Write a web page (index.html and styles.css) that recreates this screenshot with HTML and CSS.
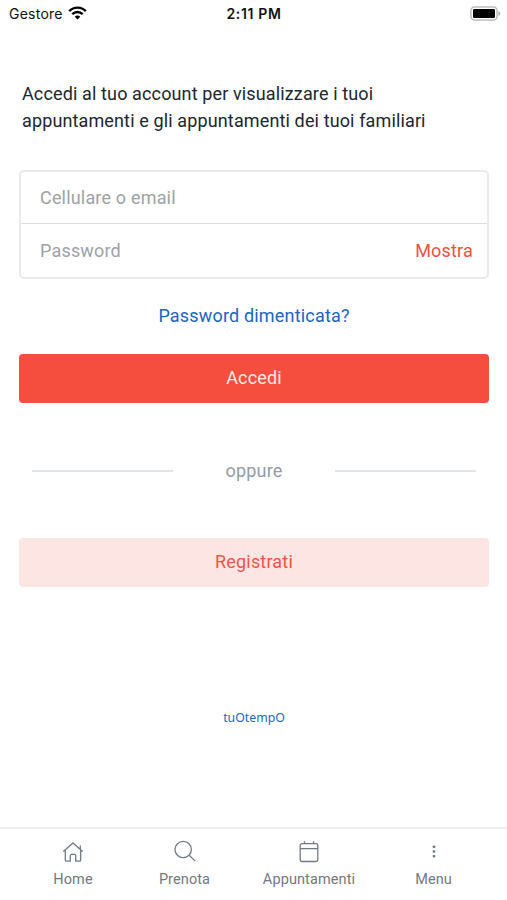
FILE: index.html
```html
<!DOCTYPE html>
<html lang="it">
<head>
<meta charset="utf-8">
<meta name="viewport" content="width=device-width, initial-scale=1">
<title>Accedi</title>
<link rel="stylesheet" href="styles.css">
</head>
<body>
<div class="app">
  <header class="status">
    <div class="carrier"><span>Gestore</span>
      <svg class="wifi" width="19" height="14" viewBox="0 0 19 14" fill="none" stroke="#050505" stroke-width="2.4"><path d="M1.2 5.1C5.8.4 13.2.4 17.8 5.1M4.3 8.2c2.9-2.9 7.5-2.9 10.4 0"/><path d="M6.7 10.7c1.7-1.5 3.9-1.5 5.6 0L9.5 13.5z" fill="#050505" stroke="none"/></svg>
    </div>
    <time class="time">2:11 PM</time>
    <svg class="battery" width="31" height="15" viewBox="0 0 31 15"><rect x=".9" y=".9" width="26.2" height="13.2" rx="3.8" fill="#fff" stroke="#bdbdbd" stroke-width="1.5"/><rect x="3" y="3" width="22" height="9" rx="1.2" fill="#000"/><path d="M28.5 5.2c2.3.8 2.3 3.8 0 4.6z" fill="#aaa"/></svg>
  </header>
  <main class="content">
    <p class="intro">Accedi al tuo account per visualizzare i tuoi<br>appuntamenti e gli appuntamenti dei tuoi familiari</p>
    <form class="form">
      <div class="fields">
        <label class="field"><input class="input" type="text" placeholder="Cellulare o email"></label>
        <div class="field"><input class="input" type="password" placeholder="Password"><button class="show" type="button">Mostra</button></div>
      </div>
      <a class="forgot" href="#">Password dimenticata?</a>
      <button class="button primary" type="button">Accedi</button>
    </form>
    <div class="separator"><span>oppure</span></div>
    <button class="button secondary" type="button">Registrati</button>
    <a class="brand" href="#">tuOtempO</a>
  </main>
  <nav class="tabs">
    <a class="tab" href="#"><svg width="24" height="24" viewBox="0 0 24 24"><path d="M2.3 11.6 12 3l9.7 8.6M19.3 5.6v3.8M4.3 10v10q0 1.2 1.2 1.2h3.8v-5.8q0-1 1-1h3.4q1 0 1 1v5.8h3.8q1.2 0 1.2-1.2V10"/></svg><span>Home</span></a>
    <a class="tab" href="#"><svg width="24" height="24" viewBox="0 0 24 24"><circle cx="10.2" cy="9.5" r="8.2"/><path d="m16.2 15.3 6 5.8"/></svg><span>Prenota</span></a>
    <a class="tab" href="#"><svg width="24" height="24" viewBox="0 0 24 24"><rect x="3.2" y="3.7" width="17.6" height="17.8" rx="1.7"/><path d="M3.2 8.6h17.6M7.5 1.2v2.5M16.5 1.2v2.5"/></svg><span>Appuntamenti</span></a>
    <a class="tab" href="#"><svg class="dots" width="24" height="24" viewBox="0 0 24 24"><rect x="10.7" y="5.4" width="2.6" height="2.6" rx=".8"/><rect x="10.7" y="10.2" width="2.6" height="2.6" rx=".8"/><rect x="10.7" y="15" width="2.6" height="2.6" rx=".8"/></svg><span>Menu</span></a>
  </nav>
</div>
</body>
</html>
```
FILE: styles.css
```css
* { box-sizing: border-box; }
body { margin: 0; background: #fff; font-family: Roboto, sans-serif; font-size: 18px; letter-spacing: .18px; color: #20262e; }
a { text-decoration: none; }
button, input { font: inherit; letter-spacing: inherit; border: 0; padding: 0; background: none; }
.app { height: 900px; display: flex; flex-direction: column; overflow: hidden; }
.status { height: 28px; padding: 0 6px 2px 9px; display: grid; grid-template-columns: 1fr auto 1fr; align-items: center; font-family: Inter, sans-serif; font-size: 14px; color: #111; letter-spacing: .25px; }
.carrier { display: flex; align-items: center; gap: 5px; }
.wifi { margin-top: -1px; }
.time { font-weight: 600; letter-spacing: .65px; margin-right: 2px; }
.battery { justify-self: end; }
.content { flex: 1; padding: 52px 18px 0 19px; display: flex; flex-direction: column; }
.intro { margin: 0 0 37px 3px; line-height: 27px; letter-spacing: .13px; white-space: nowrap; }
.form { display: flex; flex-direction: column; }
.fields { border: 2px solid #e9eaeb; border-radius: 5px; height: 109px; display: grid; grid-template-rows: 51px 54px; margin-top: -1px; }
.field { display: flex; align-items: center; padding: 0 14px 0 19px; }
.field + .field { border-top: 1px solid #dcdfe1; }
.input { flex: 1; min-width: 0; color: #20262e; outline: 0; }
.input::placeholder { color: #9da2a8; opacity: 1; }
.show { color: #f3503f; }
.forgot { align-self: center; margin: 23px 0 24px; line-height: 28px; color: #1d63bf; }
.button { height: 49px; border-radius: 4px; width: 100%; padding-bottom: 2px; }
.primary { background: #f54e3e; color: #ffe9e6; }
.secondary { background: #fce5e3; color: #ee5546; }
.separator { display: grid; grid-template-columns: 1fr 162px 1fr; align-items: center; text-align: center; margin: 54px 13px 53px; line-height: 28px; color: #959ca5; }
.separator::before, .separator::after { content: ""; height: 2px; background: #e1e5e8; }
.brand { align-self: center; margin-top: 121px; font-family: "Noto Sans", sans-serif; font-size: 12.3px; line-height: 20px; letter-spacing: 0; color: #1c68c5; }
.tabs { height: 73px; border-top: 2px solid #f0f0f0; padding: 11px 11px 0; display: grid; grid-template-columns: 124px 99px 150px 99px; }
.tab { display: flex; flex-direction: column; align-items: center; gap: 7px; color: #717984; font-size: 14.5px; line-height: 18px; letter-spacing: .1px; }
.tab svg { fill: none; stroke: currentColor; stroke-width: 1.3; stroke-linejoin: round; }
.tab .dots { fill: currentColor; stroke: none; }
```
